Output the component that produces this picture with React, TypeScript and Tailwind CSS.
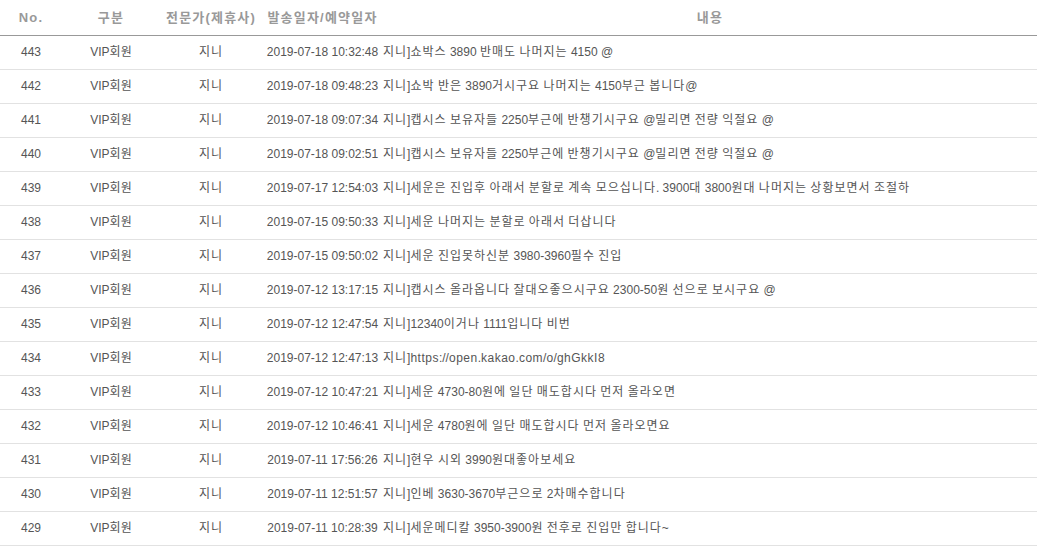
import React from "react";

type Row = { no: number; date: string; content: string };

const rows: Row[] = [
  { no: 443, date: "2019-07-18 10:32:48", content: "지니]쇼박스 3890 반매도 나머지는 4150 @" },
  { no: 442, date: "2019-07-18 09:48:23", content: "지니]쇼박 반은 3890거시구요 나머지는 4150부근 봅니다@" },
  { no: 441, date: "2019-07-18 09:07:34", content: "지니]캡시스 보유자들 2250부근에 반챙기시구요 @밀리면 전량 익절요 @" },
  { no: 440, date: "2019-07-18 09:02:51", content: "지니]캡시스 보유자들 2250부근에 반챙기시구요 @밀리면 전량 익절요 @" },
  { no: 439, date: "2019-07-17 12:54:03", content: "지니]세운은 진입후 아래서 분할로 계속 모으십니다. 3900대 3800원대 나머지는 상황보면서 조절하" },
  { no: 438, date: "2019-07-15 09:50:33", content: "지니]세운 나머지는 분할로 아래서 더삽니다" },
  { no: 437, date: "2019-07-15 09:50:02", content: "지니]세운 진입못하신분 3980-3960필수 진입" },
  { no: 436, date: "2019-07-12 13:17:15", content: "지니]캡시스 올라옵니다 잘대오좋으시구요 2300-50원 선으로 보시구요 @" },
  { no: 435, date: "2019-07-12 12:47:54", content: "지니]12340이거나 1111입니다 비번" },
  { no: 434, date: "2019-07-12 12:47:13", content: "지니]https://open.kakao.com/o/ghGkkI8" },
  { no: 433, date: "2019-07-12 10:47:21", content: "지니]세운 4730-80원에 일단 매도합시다 먼저 올라오면" },
  { no: 432, date: "2019-07-12 10:46:41", content: "지니]세운 4780원에 일단 매도합시다 먼저 올라오면요" },
  { no: 431, date: "2019-07-11 17:56:26", content: "지니]현우 시외 3990원대좋아보세요" },
  { no: 430, date: "2019-07-11 12:51:57", content: "지니]인베 3630-3670부근으로 2차매수합니다" },
  { no: 429, date: "2019-07-11 10:28:39", content: "지니]세운메디칼 3950-3900원 전후로 진입만 합니다~" },
];

// hangul runs get a little extra tracking so they sit as wide as the original font
const spaced = (text: string) =>
  text.split(/([\uAC00-\uD7A3]+|[A-Za-z]+)/).map((part, i) => {
    if (/[\uAC00-\uD7A3]/.test(part)) {
      return (
        <span key={i} className="tracking-[1px]">
          {part}
        </span>
      );
    }
    if (/[A-Za-z]/.test(part)) {
      return (
        <span key={i} className="tracking-[0.5px]">
          {part}
        </span>
      );
    }
    return part;
  });

export default function App() {
  return (
    <div
      className="w-[1037px] h-[546px] bg-white overflow-hidden"
      style={{ fontFamily: '"Liberation Sans", "Noto Sans CJK KR", sans-serif' }}
    >
      <table className="w-full border-collapse table-fixed text-[12px] text-[#555]">
        <colgroup>
          <col className="w-[62px]" />
          <col className="w-[98px]" />
          <col className="w-[102px]" />
          <col className="w-[121px]" />
          <col />
        </colgroup>
        <thead>
          <tr className="h-[35px] border-b border-[#999] text-[#999] text-[13px] tracking-[1.2px]">
            <th className="text-center font-bold">No.</th>
            <th className="text-center font-bold">구분</th>
            <th className="text-center font-bold whitespace-nowrap">전문가(제휴사)</th>
            <th className="text-center font-bold whitespace-nowrap">발송일자/예약일자</th>
            <th className="text-center font-bold">내용</th>
          </tr>
        </thead>
        <tbody>
          {rows.map((r) => (
            <tr key={r.no} className="h-[34px] border-b border-[#e2e2e2]">
              <td className="text-center">{r.no}</td>
              <td className="text-center">VIP회원</td>
              <td className="text-center">{spaced("지니")}</td>
              <td className="text-center whitespace-nowrap">{r.date}</td>
              <td className="whitespace-nowrap overflow-hidden">{spaced(r.content)}</td>
            </tr>
          ))}
        </tbody>
      </table>
    </div>
  );
}
